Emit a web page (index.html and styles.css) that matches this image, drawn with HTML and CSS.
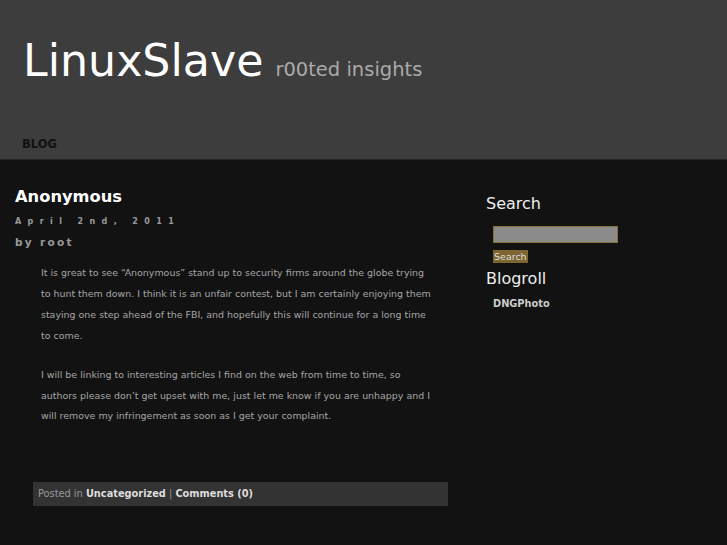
FILE: index.html
```html
<!DOCTYPE html>
<html>
<head>
<meta charset="utf-8">
<title>LinuxSlave</title>
<link rel="stylesheet" href="styles.css">
</head>
<body>
<header class="header">
  <div class="brand">
    <h1 class="site-title">LinuxSlave</h1>
    <span class="tagline">r00ted insights</span>
  </div>
  <nav class="nav"><a class="nav-link" href="#">BLOG</a></nav>
</header>
<div class="page">
  <main class="content">
    <article class="post">
      <h2 class="post-title">Anonymous</h2>
      <div class="post-date">April 2nd, 2011</div>
      <div class="post-author">by root</div>
      <div class="post-body">
        <p>It is great to see “Anonymous” stand up to security firms around the globe trying to hunt them down. I think it is an unfair contest, but I am certainly enjoying them staying one step ahead of the FBI, and hopefully this will continue for a long time to come.</p>
        <p>I will be linking to interesting articles I find on the web from time to time, so authors please don’t get upset with me, just let me know if you are unhappy and I will remove my infringement as soon as I get your complaint.</p>
      </div>
      <div class="post-meta">Posted in <a href="#">Uncategorized</a> | <a href="#">Comments (0)</a></div>
    </article>
  </main>
  <aside class="sidebar">
    <h3 class="widget-title">Search</h3>
    <form class="search-form">
      <input class="search-input" type="text">
      <button class="search-btn" type="button">Search</button>
    </form>
    <h3 class="widget-title">Blogroll</h3>
    <ul class="links"><li><a href="#">DNGPhoto</a></li></ul>
  </aside>
</div>
</body>
</html>
```
FILE: styles.css
```css
html, body { margin: 0; padding: 0; }
body {
  background: #121212;
  font-family: "DejaVu Sans", Verdana, sans-serif;
  color: #aaa;
  height: 545px;
  overflow: hidden;
}
a { text-decoration: none; }
.header {
  background: #3d3d3d;
  height: 160px;
  border-bottom: 1px solid #262626;
  box-sizing: border-box;
  padding: 0 0 0 22px;
  display: flex;
  flex-direction: column;
}
.brand {
  display: flex;
  align-items: baseline;
  padding-top: 33px;
  height: 95px;
  box-sizing: border-box;
}
.site-title {
  margin: 0 0 0 1px;
  font-weight: normal;
  font-size: 44.3px;
  line-height: 56px;
  color: #fff;
}
.tagline {
  margin-left: 12px;
  font-size: 19.5px;
  color: #aaa;
}
.nav { padding-top: 38px; }
.nav-link {
  font-size: 11.5px;
  font-weight: bold;
  color: #111;
}
.page {
  display: flex;
}
.content {
  width: 486px;
  box-sizing: border-box;
  padding: 27px 0 0 15px;
}
.post-title {
  margin: 0;
  font-size: 16.3px;
  line-height: 20px;
  color: #fff;
}
.post-date {
  margin-top: 10px;
  font-size: 8px;
  font-weight: bold;
  letter-spacing: 6.4px;
  color: #999;
  line-height: 10px;
}
.post-author {
  margin-top: 9px;
  font-size: 10.5px;
  font-weight: bold;
  letter-spacing: 2.3px;
  color: #999;
  line-height: 13px;
}
.post-body {
  padding: 14px 0 0 26px;
  width: 392px;
}
.post-body p {
  margin: 0 0 18px;
  font-size: 9.45px;
  line-height: 20.9px;
  color: #a6a6a6;
}
.post-meta {
  margin: 55px 0 0 18px;
  width: 415px;
  box-sizing: border-box;
  background: #333;
  height: 24px;
  line-height: 24px;
  padding-left: 5px;
  font-size: 9.8px;
  color: #999;
}
.post-meta a { color: #ddd; font-weight: bold; }
.sidebar {
  padding-top: 34px;
}
.widget-title {
  margin: 0;
  font-weight: normal;
  font-size: 16px;
  line-height: 20px;
  color: #eee;
}
.search-form {
  padding: 12px 0 6px 7px;
  display: flex;
  flex-direction: column;
  align-items: flex-start;
}
.search-input {
  width: 125px;
  height: 17px;
  box-sizing: border-box;
  background: #8b8b8b;
  border: 1px solid #86703a;
  margin: 0;
  padding: 0;
}
.search-btn {
  margin-top: 7px;
  background: #7d6631;
  border: 0;
  padding: 0 1px;
  height: 13px;
  line-height: 13px;
  font-family: "DejaVu Sans", sans-serif;
  font-size: 9.5px;
  color: #ddd;
}
.links {
  list-style: none;
  margin: 0;
  padding: 3px 0 0 7px;
}
.links a {
  font-size: 9.8px;
  font-weight: bold;
  color: #ccc;
}
```
